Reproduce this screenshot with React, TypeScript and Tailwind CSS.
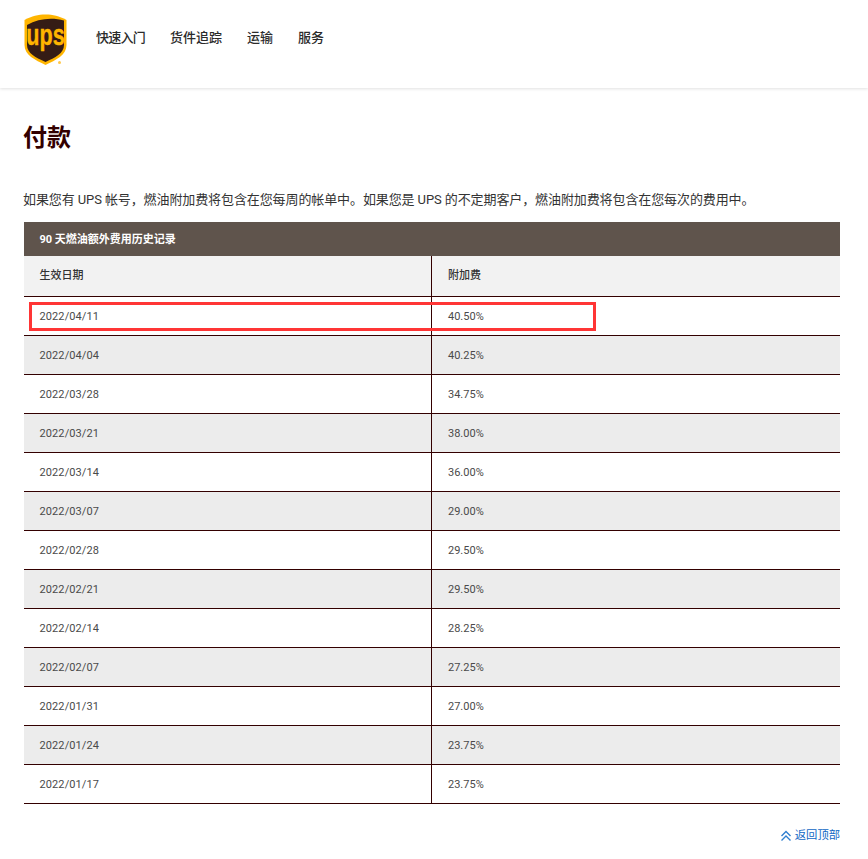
const rows: [string, string][] = [
  ["2022/04/11", "40.50%"],
  ["2022/04/04", "40.25%"],
  ["2022/03/28", "34.75%"],
  ["2022/03/21", "38.00%"],
  ["2022/03/14", "36.00%"],
  ["2022/03/07", "29.00%"],
  ["2022/02/28", "29.50%"],
  ["2022/02/21", "29.50%"],
  ["2022/02/14", "28.25%"],
  ["2022/02/07", "27.25%"],
  ["2022/01/31", "27.00%"],
  ["2022/01/24", "23.75%"],
  ["2022/01/17", "23.75%"],
];

function Logo() {
  return (
    <svg width="44" height="52" viewBox="0 0 44 52" className="block">
      <path d="M0.5 6 C8 2 14 0.5 21.5 0.5 C29 0.5 35 2 42.5 6 L42.5 31 C42.5 41 32 46 21.5 51 C11 46 0.5 41 0.5 31 Z" fill="#ffb500" />
      <path d="M3 11 C14 4.5 28 3 40 6.5 L40 31 C40 39.5 31 43.5 21.5 48 C12 43.5 3 39.5 3 31 Z" fill="#351c15" />
      <g transform="translate(21.5 31) scale(0.72 1)">
        <text x="0" y="0" textAnchor="middle" fontFamily="'Liberation Sans', sans-serif" fontWeight="700" fontSize="30" fill="#ffb500" stroke="#ffb500" strokeWidth="0.4">ups</text>
      </g>
    </svg>
  );
}

export default function App() {
  return (
    <div className="w-[868px] h-[859px] overflow-hidden bg-white text-[#333] font-['Roboto','Noto_Sans_CJK_SC',sans-serif]">
      <header className="h-[88px] flex items-start pl-6 shadow-[0_1px_3px_rgba(0,0,0,0.12)]">
        <div className="relative mt-[14px]">
          <Logo />
          <span className="absolute left-[34px] top-[47px] w-[3px] h-[3px] rounded-full bg-[#ffc94d]" />
        </div>
        <nav className="flex gap-[25px] ml-[28px] mt-[29px] text-[13px] leading-[18px] font-medium text-[#2b2b2b]">
          <span className="tracking-[-0.75px]">快速入门</span>
          <span>货件追踪</span>
          <span>运输</span>
          <span>服务</span>
        </nav>
      </header>

      <main className="px-6">
        <h1 className="mt-[33px] -ml-px text-[24px] leading-[34px] font-bold text-[#330000]">付款</h1>
        <p className="mt-[35px] -ml-px text-[13px] leading-[20px] tracking-[-0.1px] text-[#333]">
          如果您有 UPS 帐号，燃油附加费将包含在您每周的帐单中。如果您是 UPS 的不定期客户，燃油附加费将包含在您每次的费用中。
        </p>

        <div className="relative mt-[12px] w-[816px] text-[11px]">
          <div className="h-[34px] bg-[#5f544c] pl-[15.5px] pt-[2px] flex items-center font-bold text-white">90 天燃油额外费用历史记录</div>
          <div className="flex h-[41px] bg-[#f2f2f2] border-b border-[#330000] font-medium text-[#333]">
            <div className="w-[408px] border-r border-[#330000] pl-[15.5px] pt-[11px] leading-[18px]">生效日期</div>
            <div className="pl-4 pt-[11px] leading-[18px]">附加费</div>
          </div>
          {rows.map(([date, fee], i) => (
            <div key={date} className={`flex h-[39px] border-b border-[#330000] text-[#4a4a4a] ${i % 2 === 1 ? "bg-[#ececec]" : "bg-white"}`}>
              <div className="w-[408px] border-r border-[#330000] pl-[15.5px] pt-[2px] flex items-center tracking-[0.1px]">{date}</div>
              <div className="pl-4 pt-[2px] flex items-center">{fee}</div>
            </div>
          ))}
          <div className="absolute left-[5px] top-[80px] w-[567px] h-[29px] border-[3px] border-[#ff3535]" />
        </div>

        <div className="mt-[24px] w-[816px] flex justify-end items-center gap-[3px] text-[11.3px] leading-[16px] text-[#0f66c4]">
          <svg width="12" height="12" viewBox="0 0 12 12" fill="none" stroke="#2f7fd0" strokeWidth="1.4">
            <path d="M1.5 6 L6 1.5 L10.5 6" />
            <path d="M1.5 10.5 L6 6 L10.5 10.5" />
          </svg>
          <span>返回顶部</span>
        </div>
      </main>
    </div>
  );
}
